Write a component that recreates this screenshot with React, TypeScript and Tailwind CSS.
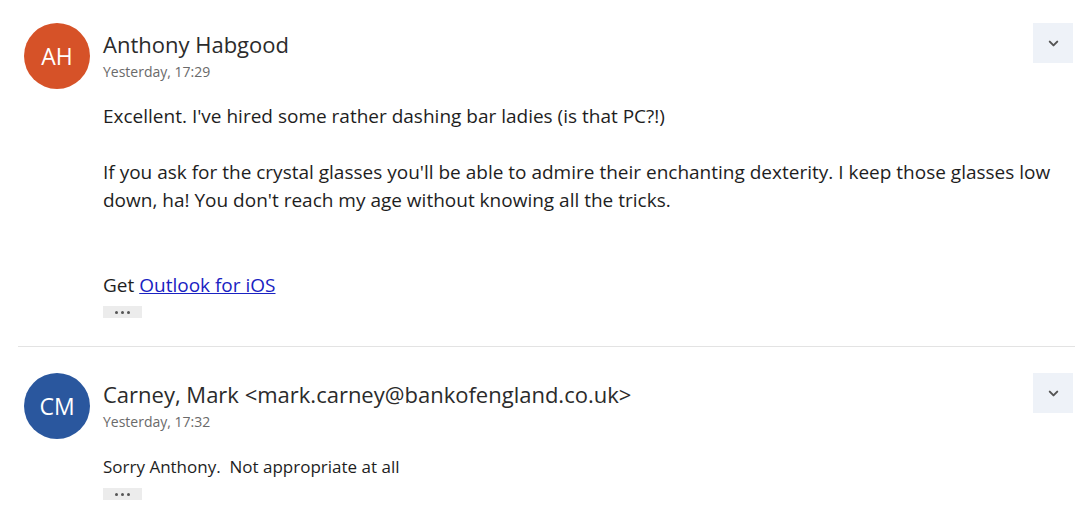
import { ChevronDown } from 'lucide-react'

interface MessageProps {
  initials: string
  color: string
  sender: string
  time: string
  children: React.ReactNode
}

function MoreButton() {
  return (
    <div className="mt-[7px] flex h-[12px] w-[39px] items-center justify-center gap-[3px] bg-[#ececec]">
      <span className="h-[3px] w-[3px] rounded-full bg-[#555]" />
      <span className="h-[3px] w-[3px] rounded-full bg-[#555]" />
      <span className="h-[3px] w-[3px] rounded-full bg-[#555]" />
    </div>
  )
}

function Message({ initials, color, sender, time, children }: MessageProps) {
  return (
    <div className="flex gap-[13px] pl-[24px] pr-[18px]">
      <div
        className={`flex h-[66px] w-[66px] shrink-0 items-center justify-center rounded-full text-[23px] text-white ${color}`}
      >
        {initials}
      </div>
      <div className="min-w-0 flex-1">
        <div className="flex items-start justify-between">
          <div className="pt-[6px]">
            <p className="text-[22px] leading-[30px] text-[#2b2b2b]">{sender}</p>
            <p className="mt-[4px] text-[14px] leading-[18px] text-[#6a6a6a]">{time}</p>
          </div>
          <button className="flex h-[40px] w-[40px] items-center justify-center bg-[#eef2f8] text-[#555]">
            <ChevronDown className="h-[15px] w-[15px]" strokeWidth={3.2} />
          </button>
        </div>
        {children}
      </div>
    </div>
  )
}

export default function App() {
  return (
    <div className="h-[510px] w-[1091px] overflow-hidden bg-white pt-[23px] font-['Open_Sans',sans-serif] text-[#1e1e1e]">
      <Message initials="AH" color="bg-[#d65228]" sender="Anthony Habgood" time="Yesterday, 17:29">
        <div className="mt-[21px] text-[19px] leading-[28px]">
          <p>Excellent. I've hired some rather dashing bar ladies (is that PC?!)</p>
          <p className="mt-[28px]">
            If you ask for the crystal glasses you'll be able to admire their enchanting dexterity. I keep those glasses low
            down, ha! You don't reach my age without knowing all the tricks.
          </p>
          <p className="mt-[57px]">
            Get <a className="text-[#1a22c2] underline">Outlook for iOS</a>
          </p>
        </div>
        <MoreButton />
      </Message>
      <div className="ml-[18px] mr-[16px] mt-[28px] border-t border-[#e3e3e3]" />
      <div className="pt-[26px]">
        <Message
          initials="CM"
          color="bg-[#2a579e]"
          sender="Carney, Mark <mark.carney@bankofengland.co.uk>"
          time="Yesterday, 17:32"
        >
          <div className="mt-[22px] text-[17px] leading-[28px]">
            <p className="whitespace-pre">Sorry Anthony.  Not appropriate at all</p>
          </div>
          <MoreButton />
        </Message>
      </div>
    </div>
  )
}
